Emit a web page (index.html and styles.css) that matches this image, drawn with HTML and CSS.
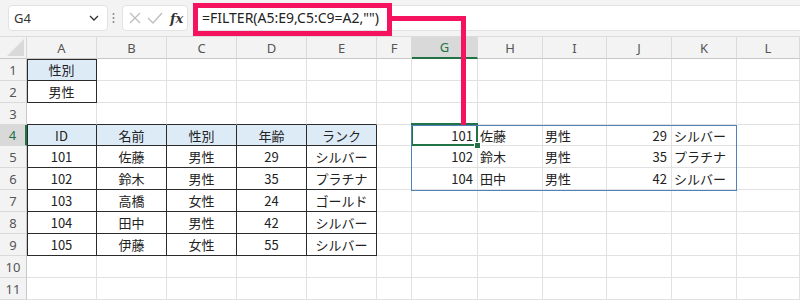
FILE: index.html
```html
<!DOCTYPE html>
<html lang="ja">
<head>
<meta charset="utf-8">
<link rel="stylesheet" href="styles.css">
</head>
<body>
<div class="page">
  <div class="toolbar">
    <div class="namebox"><span>G4</span>
      <svg class="chev" width="10" height="6" viewBox="0 0 10 6"><polyline points="1,1 5,5 9,1" fill="none" stroke="#333" stroke-width="1.3"/></svg>
    </div>
    <svg class="grip" width="3" height="12" viewBox="0 0 3 12"><circle cx="1.5" cy="2" r="1" fill="#888"/><circle cx="1.5" cy="6" r="1" fill="#888"/><circle cx="1.5" cy="10" r="1" fill="#888"/></svg>
    <div class="fxbox">
      <svg width="14" height="14" viewBox="0 0 14 14"><path d="M2 2 L12 12 M12 2 L2 12" stroke="#bdbdbd" stroke-width="1.3" fill="none"/></svg>
      <svg width="16" height="14" viewBox="0 0 16 14"><path d="M1 7 L6 12 L15 2" stroke="#bdbdbd" stroke-width="1.3" fill="none"/></svg>
      <span class="fx">fx</span>
    </div>
    <div class="formula">=FILTER(A5:E9,C5:C9=A2,"")</div>
  </div>

  <div class="sheet">
    <div class="row head">
      <div class="corner"><svg width="17" height="17" viewBox="0 0 17 17"><polygon points="17,0 17,17 0,17" fill="#d9d9d9"/></svg></div>
      <div class="ch">A</div><div class="ch">B</div><div class="ch">C</div><div class="ch">D</div><div class="ch">E</div><div class="ch">F</div><div class="ch sel">G</div><div class="ch">H</div><div class="ch">I</div><div class="ch">J</div><div class="ch">K</div><div class="ch">L</div>
    </div>
    <div class="row">
      <div class="rh">1</div><div class="c t tt tl hd">性別</div><div class="c"></div><div class="c"></div><div class="c"></div><div class="c"></div><div class="c"></div><div class="c"></div><div class="c"></div><div class="c"></div><div class="c"></div><div class="c"></div><div class="c"></div>
    </div>
    <div class="row">
      <div class="rh">2</div><div class="c t tl">男性</div><div class="c"></div><div class="c"></div><div class="c"></div><div class="c"></div><div class="c"></div><div class="c"></div><div class="c"></div><div class="c"></div><div class="c"></div><div class="c"></div><div class="c"></div>
    </div>
    <div class="row">
      <div class="rh">3</div><div class="c dk"></div><div class="c dk"></div><div class="c dk"></div><div class="c dk"></div><div class="c dk"></div><div class="c"></div><div class="c"></div><div class="c"></div><div class="c"></div><div class="c"></div><div class="c"></div><div class="c"></div>
    </div>
    <div class="row r21">
      <div class="rh rsel">4</div><div class="c t tl hd">ID</div><div class="c t hd">名前</div><div class="c t hd">性別</div><div class="c t hd">年齢</div><div class="c t hd">ランク</div><div class="c"></div><div class="c num active">101</div><div class="c txt">佐藤</div><div class="c txt">男性</div><div class="c num">29</div><div class="c txt">シルバー</div><div class="c"></div>
    </div>
    <div class="row">
      <div class="rh">5</div><div class="c t tl">101</div><div class="c t">佐藤</div><div class="c t">男性</div><div class="c t">29</div><div class="c t">シルバー</div><div class="c"></div><div class="c num">102</div><div class="c txt">鈴木</div><div class="c txt">男性</div><div class="c num">35</div><div class="c txt">プラチナ</div><div class="c"></div>
    </div>
    <div class="row">
      <div class="rh">6</div><div class="c t tl">102</div><div class="c t">鈴木</div><div class="c t">男性</div><div class="c t">35</div><div class="c t">プラチナ</div><div class="c"></div><div class="c num">104</div><div class="c txt">田中</div><div class="c txt">男性</div><div class="c num">42</div><div class="c txt">シルバー</div><div class="c"></div>
    </div>
    <div class="row">
      <div class="rh">7</div><div class="c t tl">103</div><div class="c t">高橋</div><div class="c t">女性</div><div class="c t">24</div><div class="c t">ゴールド</div><div class="c"></div><div class="c"></div><div class="c"></div><div class="c"></div><div class="c"></div><div class="c"></div><div class="c"></div>
    </div>
    <div class="row">
      <div class="rh">8</div><div class="c t tl">104</div><div class="c t">田中</div><div class="c t">男性</div><div class="c t">42</div><div class="c t">シルバー</div><div class="c"></div><div class="c"></div><div class="c"></div><div class="c"></div><div class="c"></div><div class="c"></div><div class="c"></div>
    </div>
    <div class="row">
      <div class="rh">9</div><div class="c t tl">105</div><div class="c t">伊藤</div><div class="c t">女性</div><div class="c t">55</div><div class="c t">シルバー</div><div class="c"></div><div class="c"></div><div class="c"></div><div class="c"></div><div class="c"></div><div class="c"></div><div class="c"></div>
    </div>
    <div class="row">
      <div class="rh">10</div><div class="c"></div><div class="c"></div><div class="c"></div><div class="c"></div><div class="c"></div><div class="c"></div><div class="c"></div><div class="c"></div><div class="c"></div><div class="c"></div><div class="c"></div><div class="c"></div>
    </div>
    <div class="row">
      <div class="rh">11</div><div class="c"></div><div class="c"></div><div class="c"></div><div class="c"></div><div class="c"></div><div class="c"></div><div class="c"></div><div class="c"></div><div class="c"></div><div class="c"></div><div class="c"></div><div class="c"></div>
    </div>
    <div class="spill"></div>
  </div>

  <div class="mark-box"></div>
  <div class="mark-h"></div>
  <div class="mark-v"></div>
</div>
</body>
</html>
```

FILE: styles.css
```css
html, body {
  margin: 0;
  padding: 0;
  background: #ffffff;
}
.page {
  position: relative;
  width: 800px;
  height: 300px;
  overflow: hidden;
  font-family: "Noto Sans CJK JP", "Noto Sans", sans-serif;
  color: #222;
}
.toolbar {
  height: 37px;
  background: #f3f3f3;
  display: flex;
  align-items: flex-start;
  padding-top: 5px;
  box-sizing: border-box;
  border-bottom: 1px solid #dcdcdc;
}
.namebox {
  margin-left: 8px;
  width: 100px;
  height: 26px;
  box-sizing: border-box;
  background: #fff;
  border: 1px solid #e2e2e2;
  border-radius: 4px;
  display: flex;
  align-items: center;
  justify-content: space-between;
  padding: 0 8px 0 5px;
  font-family: "Noto Sans", sans-serif;
  font-size: 13px;
  color: #333;
}
.grip {
  margin: 7px 0 0 4px;
}
.fxbox {
  margin-left: 7px;
  width: 66px;
  height: 26px;
  box-sizing: border-box;
  background: #fff;
  border: 1px solid #e2e2e2;
  border-radius: 4px;
  display: flex;
  align-items: center;
  gap: 5px;
  padding-left: 5px;
}
.fx {
  font-family: "DejaVu Serif", "Liberation Serif", serif;
  font-style: italic;
  font-weight: bold;
  font-size: 13px;
  color: #333;
  margin-left: 2px;
}
.formula {
  margin-left: 5px;
  flex: 1;
  height: 26px;
  box-sizing: border-box;
  background: #fff;
  border-top: 1px solid #e2e2e2;
  border-bottom: 1px solid #e2e2e2;
  padding-left: 9px;
  font-family: "Noto Sans", sans-serif;
  font-size: 14px;
  line-height: 24px;
  color: #222;
}
.sheet {
  position: relative;
}
.row {
  display: grid;
  grid-template-columns: 27px 70px 70px 70px 70px 70px 35px 66px 65px 64px 65px 65px 63px;
  height: 22px;
}
.row.head {
  height: 22px;
}
.row.r21 {
  height: 21px;
}
.corner {
  background: #f3f3f3;
  border-right: 1px solid #d6d6d6;
  border-bottom: 1px solid #c8c8c8;
  display: flex;
  align-items: flex-end;
  justify-content: flex-end;
  padding: 0 2px 2px 0;
  box-sizing: border-box;
}
.ch {
  background: #f3f3f3;
  border-right: 1px solid #dadada;
  border-bottom: 1px solid #c8c8c8;
  box-sizing: border-box;
  display: flex;
  align-items: center;
  justify-content: center;
  font-family: "Noto Sans", sans-serif;
  font-size: 13px;
  color: #555;
}
.ch.sel {
  background: #d9d9d9;
  color: #217346;
  border-bottom: 2px solid #217346;
}
.rh {
  background: #f3f3f3;
  border-right: 1px solid #c8c8c8;
  border-bottom: 1px solid #dadada;
  box-sizing: border-box;
  display: flex;
  align-items: center;
  justify-content: center;
  font-family: "Noto Sans", sans-serif;
  font-size: 13px;
  color: #555;
}
.rh.rsel {
  background: #d9d9d9;
  color: #217346;
  border-right: 2px solid #217346;
}
.c {
  border-right: 1px solid #e1e1e1;
  border-bottom: 1px solid #e1e1e1;
  box-sizing: border-box;
  display: flex;
  align-items: center;
  justify-content: center;
  font-size: 13px;
  color: #222;
  white-space: nowrap;
  position: relative;
}
.c.t {
  border-right-color: #2b2b2b;
  border-bottom-color: #2b2b2b;
}
.c.dk {
  border-bottom-color: #2b2b2b;
}
.c.tl {
  box-shadow: inset 1px 0 #2b2b2b;
}
.c.tt.tl {
  box-shadow: inset 1px 1px #2b2b2b;
}
.c.hd {
  background: #ddebf7;
}
.c.num {
  justify-content: flex-end;
  padding-right: 4px;
}
.c.txt {
  justify-content: flex-start;
  padding-left: 2px;
}
.c.active::after {
  content: "";
  position: absolute;
  left: -1px;
  top: -2px;
  right: -1px;
  bottom: -1px;
  border: 2px solid #217346;
}
.c.active::before {
  content: "";
  position: absolute;
  right: -4px;
  bottom: -4px;
  width: 5px;
  height: 5px;
  background: #217346;
  border: 1px solid #fff;
  z-index: 2;
}
.spill {
  position: absolute;
  left: 411px;
  top: 88px;
  width: 326px;
  height: 66px;
  border: 1px solid #4f81bd;
  box-sizing: border-box;
  pointer-events: none;
}
.mark-box {
  position: absolute;
  left: 193px;
  top: 3px;
  width: 199px;
  height: 33px;
  box-sizing: border-box;
  border: 5px solid #f5125e;
}
.mark-h {
  position: absolute;
  left: 392px;
  top: 16px;
  width: 74px;
  height: 5px;
  background: #f5125e;
}
.mark-v {
  position: absolute;
  left: 461px;
  top: 16px;
  width: 5px;
  height: 109px;
  background: #f5125e;
}
```
